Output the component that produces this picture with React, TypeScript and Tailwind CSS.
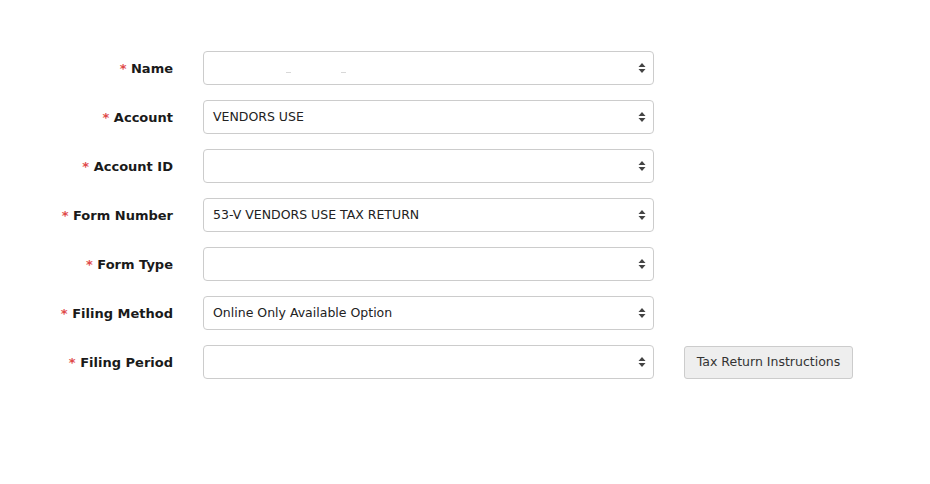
import React from 'react';

interface FieldRow {
  label: string;
  value: string;
  button?: string;
}

const rows: FieldRow[] = [
  { label: 'Name', value: '' },
  { label: 'Account', value: 'VENDORS USE' },
  { label: 'Account ID', value: '' },
  { label: 'Form Number', value: '53-V VENDORS USE TAX RETURN' },
  { label: 'Form Type', value: '' },
  { label: 'Filing Method', value: 'Online Only Available Option' },
  { label: 'Filing Period', value: '', button: 'Tax Return Instructions' },
];

function SelectArrows() {
  return (
    <svg width="8" height="12" viewBox="0 0 8 12" className="shrink-0">
      <path d="M4 1 L7.5 5 L0.5 5 Z" fill="#444" />
      <path d="M4 11 L7.5 7 L0.5 7 Z" fill="#444" />
    </svg>
  );
}

function FakeSelect({ value, blurred }: { value: string; blurred?: boolean }) {
  return (
    <div className="relative flex h-[34px] w-[451px] items-center justify-between rounded-[4px] border border-[#cccccc] bg-white pl-[9px] pr-[7px]">
      <span className="pt-px text-[12.5px] text-[#222]">{value}</span>
      {blurred && (
        <>
          <span className="absolute left-[82px] top-[20px] h-px w-[5px] bg-[#d8d8d8]" />
          <span className="absolute left-[137px] top-[20px] h-px w-[5px] bg-[#d8d8d8]" />
        </>
      )}
      <SelectArrows />
    </div>
  );
}

export default function App() {
  return (
    <div className="h-[484px] w-[930px] bg-white pt-[51px] font-['DejaVu_Sans',sans-serif]">
      <div className="flex flex-col gap-[15px]">
        {rows.map((row, i) => (
          <div key={row.label} className="flex items-center">
            <div className="w-[173px] pt-[2px] text-right text-[13px] font-bold text-[#1a1a1a]">
              <span className="text-[#e04a4a]">*</span> {row.label}
            </div>
            <div className="ml-[30px]">
              <FakeSelect value={row.value} blurred={i === 0} />
            </div>
            {row.button && (
              <button className="ml-[30px] h-[33px] w-[169px] rounded-[3px] border border-[#cccccc] bg-[#eeeeee] pt-px text-[12.5px] text-[#333]">
                {row.button}
              </button>
            )}
          </div>
        ))}
      </div>
    </div>
  );
}
